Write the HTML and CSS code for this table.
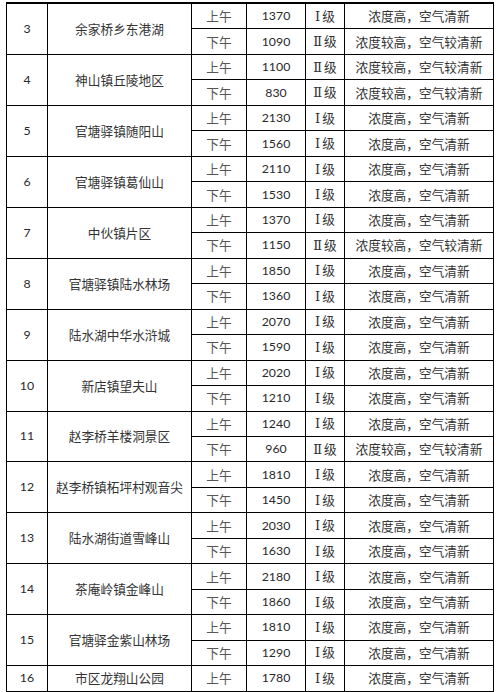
FILE: index.html
```html
<!DOCTYPE html>
<html lang="zh">
<head>
<meta charset="utf-8">
<title>负氧离子监测</title>
<link rel="stylesheet" href="styles.css">
</head>
<body>
<table class="grid">
<colgroup>
<col class="c-no"><col class="c-loc"><col class="c-time"><col class="c-val"><col class="c-lv"><col class="c-desc">
</colgroup>
<tbody>
<tr><td rowspan="2" class="num">3</td><td rowspan="2" class="loc">余家桥乡东港湖</td><td class="t">上午</td><td class="num">1370</td><td class="lv"><span class="rn">Ⅰ</span>级</td><td class="d">浓度高，空气清新</td></tr>
<tr><td class="t">下午</td><td class="num">1090</td><td class="lv"><span class="rn">Ⅱ</span>级</td><td class="d">浓度较高，空气较清新</td></tr>
<tr><td rowspan="2" class="num">4</td><td rowspan="2" class="loc">神山镇丘陵地区</td><td class="t">上午</td><td class="num">1100</td><td class="lv"><span class="rn">Ⅱ</span>级</td><td class="d">浓度较高，空气较清新</td></tr>
<tr><td class="t">下午</td><td class="num">830</td><td class="lv"><span class="rn">Ⅱ</span>级</td><td class="d">浓度较高，空气较清新</td></tr>
<tr><td rowspan="2" class="num">5</td><td rowspan="2" class="loc">官塘驿镇随阳山</td><td class="t">上午</td><td class="num">2130</td><td class="lv"><span class="rn">Ⅰ</span>级</td><td class="d">浓度高，空气清新</td></tr>
<tr><td class="t">下午</td><td class="num">1560</td><td class="lv"><span class="rn">Ⅰ</span>级</td><td class="d">浓度高，空气清新</td></tr>
<tr><td rowspan="2" class="num">6</td><td rowspan="2" class="loc">官塘驿镇葛仙山</td><td class="t">上午</td><td class="num">2110</td><td class="lv"><span class="rn">Ⅰ</span>级</td><td class="d">浓度高，空气清新</td></tr>
<tr><td class="t">下午</td><td class="num">1530</td><td class="lv"><span class="rn">Ⅰ</span>级</td><td class="d">浓度高，空气清新</td></tr>
<tr><td rowspan="2" class="num">7</td><td rowspan="2" class="loc">中伙镇片区</td><td class="t">上午</td><td class="num">1370</td><td class="lv"><span class="rn">Ⅰ</span>级</td><td class="d">浓度高，空气清新</td></tr>
<tr><td class="t">下午</td><td class="num">1150</td><td class="lv"><span class="rn">Ⅱ</span>级</td><td class="d">浓度较高，空气较清新</td></tr>
<tr><td rowspan="2" class="num">8</td><td rowspan="2" class="loc">官塘驿镇陆水林场</td><td class="t">上午</td><td class="num">1850</td><td class="lv"><span class="rn">Ⅰ</span>级</td><td class="d">浓度高，空气清新</td></tr>
<tr><td class="t">下午</td><td class="num">1360</td><td class="lv"><span class="rn">Ⅰ</span>级</td><td class="d">浓度高，空气清新</td></tr>
<tr><td rowspan="2" class="num">9</td><td rowspan="2" class="loc">陆水湖中华水浒城</td><td class="t">上午</td><td class="num">2070</td><td class="lv"><span class="rn">Ⅰ</span>级</td><td class="d">浓度高，空气清新</td></tr>
<tr><td class="t">下午</td><td class="num">1590</td><td class="lv"><span class="rn">Ⅰ</span>级</td><td class="d">浓度高，空气清新</td></tr>
<tr><td rowspan="2" class="num">10</td><td rowspan="2" class="loc">新店镇望夫山</td><td class="t">上午</td><td class="num">2020</td><td class="lv"><span class="rn">Ⅰ</span>级</td><td class="d">浓度高，空气清新</td></tr>
<tr><td class="t">下午</td><td class="num">1210</td><td class="lv"><span class="rn">Ⅰ</span>级</td><td class="d">浓度高，空气清新</td></tr>
<tr><td rowspan="2" class="num">11</td><td rowspan="2" class="loc">赵李桥羊楼洞景区</td><td class="t">上午</td><td class="num">1240</td><td class="lv"><span class="rn">Ⅰ</span>级</td><td class="d">浓度高，空气清新</td></tr>
<tr><td class="t">下午</td><td class="num">960</td><td class="lv"><span class="rn">Ⅱ</span>级</td><td class="d">浓度较高，空气较清新</td></tr>
<tr><td rowspan="2" class="num">12</td><td rowspan="2" class="loc">赵李桥镇柘坪村观音尖</td><td class="t">上午</td><td class="num">1810</td><td class="lv"><span class="rn">Ⅰ</span>级</td><td class="d">浓度高，空气清新</td></tr>
<tr><td class="t">下午</td><td class="num">1450</td><td class="lv"><span class="rn">Ⅰ</span>级</td><td class="d">浓度高，空气清新</td></tr>
<tr><td rowspan="2" class="num">13</td><td rowspan="2" class="loc">陆水湖街道雪峰山</td><td class="t">上午</td><td class="num">2030</td><td class="lv"><span class="rn">Ⅰ</span>级</td><td class="d">浓度高，空气清新</td></tr>
<tr><td class="t">下午</td><td class="num">1630</td><td class="lv"><span class="rn">Ⅰ</span>级</td><td class="d">浓度高，空气清新</td></tr>
<tr><td rowspan="2" class="num">14</td><td rowspan="2" class="loc">茶庵岭镇金峰山</td><td class="t">上午</td><td class="num">2180</td><td class="lv"><span class="rn">Ⅰ</span>级</td><td class="d">浓度高，空气清新</td></tr>
<tr><td class="t">下午</td><td class="num">1860</td><td class="lv"><span class="rn">Ⅰ</span>级</td><td class="d">浓度高，空气清新</td></tr>
<tr><td rowspan="2" class="num">15</td><td rowspan="2" class="loc">官塘驿金紫山林场</td><td class="t">上午</td><td class="num">1810</td><td class="lv"><span class="rn">Ⅰ</span>级</td><td class="d">浓度高，空气清新</td></tr>
<tr><td class="t">下午</td><td class="num">1290</td><td class="lv"><span class="rn">Ⅰ</span>级</td><td class="d">浓度高，空气清新</td></tr>
<tr><td class="num">16</td><td class="loc">市区龙翔山公园</td><td class="t">上午</td><td class="num">1780</td><td class="lv"><span class="rn">Ⅰ</span>级</td><td class="d">浓度高，空气清新</td></tr>
</tbody>
</table>
</body>
</html>
```
FILE: styles.css
```css
html, body {
  margin: 0;
  padding: 0;
  background: #fff;
}
body {
  padding: 2px 0 0 6px;
}
.grid {
  border-collapse: collapse;
  table-layout: fixed;
  width: 487px;
  color: #333;
  font-family: "Noto Sans CJK SC", "Noto Sans", sans-serif;
  font-size: 12.7px;
}
.c-no { width: 41px; }
.c-loc { width: 144px; }
.c-time { width: 55px; }
.c-val { width: 59px; }
.c-lv { width: 39px; }
.c-desc { width: 149px; }
.grid td {
  border: 1px solid #000;
  height: 24.48px;
  padding: 0;
  text-align: center;
  vertical-align: middle;
  line-height: 14px;
  white-space: nowrap;
  overflow: hidden;
}
.grid tr:first-child td {
  border-top: 2px solid #000;
}
.grid td.num {
  font-family: Lato, "Liberation Sans", sans-serif;
  font-size: 12.3px;
  color: #2a2a2a;
}
.grid td.t {
  color: #555;
}
.rn {
  font-family: "Liberation Serif", "DejaVu Serif", serif;
  font-size: 13px;
  margin-right: 2px;
}
```
